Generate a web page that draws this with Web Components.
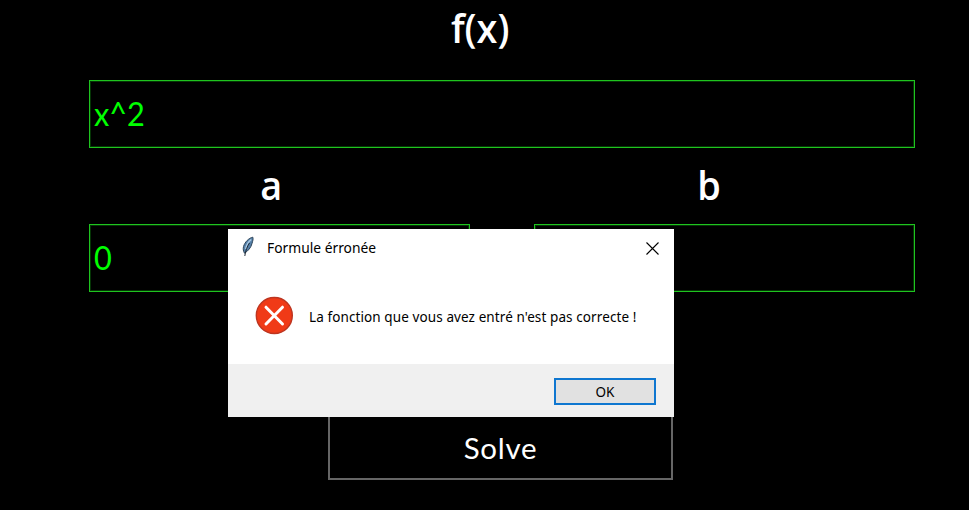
<!DOCTYPE html>
<html lang="fr">
<head>
<meta charset="utf-8">
<title>Solver</title>
<style>
html, body { margin: 0; height: 100%; background: #000; overflow: hidden; }
</style>
</head>
<body>
<solver-app></solver-app>
<script>
const define = (name, html) => customElements.define(name, class extends HTMLElement {
  constructor() {
    super();
    this.attachShadow({ mode: 'open' }).innerHTML = html;
  }
});

define('field-label', `
<style>
:host { display: flex; justify-content: center; color: #fff; font: 600 39px/54px "Open Sans", "Noto Sans", sans-serif; }
span { display: block; transform: scaleX(.97); }
</style><span><slot></slot></span>`);

define('entry-field', `
<style>
:host { display: flex; align-items: center; box-sizing: border-box; height: 68px; border: 1px solid #1fc41f; outline: 1px solid #053505; outline-offset: -2px; padding: 0 4px; background: #000; color: #0f0; font: 400 32px/40px Lato, sans-serif; }
span { display: block; transform-origin: left; transform: scaleX(.96); }
</style><span><slot></slot></span>`);

define('solve-button', `
<style>
:host { display: flex; align-items: center; justify-content: center; box-sizing: border-box; width: 345px; height: 68px; border: 2px solid #666; background: #000; color: #fff; font: 400 29.500px/40px Lato, sans-serif; letter-spacing: .7px; padding-top: 4px; }
</style><slot></slot>`);

define('feather-icon', `
<style>:host { display: block; width: 14px; height: 22px; } svg { display: block; }</style>
<svg width="14" height="22" viewBox="0 0 14 22">
<path d="M11.8 1.2C7.8 2 3.9 6 2.5 10.500C2 13 2.200 15 3.500 17.200C7.200 15 10 11.500 11 7.500C11.700 5 12.500 3 11.800 1.200Z" fill="#5580a8" stroke="#2d4358" stroke-width="1"/>
<path d="M10.300 3.500C7.500 5.500 5.500 9 4.700 13" fill="none" stroke="#a9c8e3" stroke-width="1.500"/>
<path d="M8.500 7C6.500 10 4.600 14 3.800 20" fill="none" stroke="#202a36" stroke-width="1"/>
</svg>`);

define('error-icon', `
<style>:host { display: block; width: 39px; height: 39px; } svg { display: block; }</style>
<svg width="39" height="39" viewBox="0 0 39 39">
<circle cx="19.300" cy="19.500" r="18" fill="#f03a17" stroke="#bd3520" stroke-width="1.400"/>
<path d="M11 11.200L27.500 28M27.500 11.200L11 28" stroke="#fff" stroke-width="3" stroke-linecap="round"/>
</svg>`);

define('close-icon', `
<style>:host { display: block; width: 13px; height: 13px; } svg { display: block; }</style>
<svg width="13" height="13" viewBox="0 0 13 13"><path d="M.5 .5L12.500 12.500M12.500 .5L.5 12.500" stroke="#000" stroke-width="1.100"/></svg>`);

define('dialog-button', `
<style>
:host { display: flex; align-items: center; justify-content: center; box-sizing: border-box; width: 102px; height: 27px; border: 2px solid #0f77d0; background: #e1e1e1; color: #000; font: 400 13.500px/18px "Noto Sans", sans-serif; }
</style><slot></slot>`);

define('message-dialog', `
<style>
:host { display: grid; grid-template-rows: 38px 97px 53px; width: 446px; height: 188px; background: #fff; color: #000; font-family: "Noto Sans", sans-serif; }
header { display: flex; align-items: center; padding: 0 15px 2px 13px; }
h1 { margin: 0 auto 0 12px; font-size: 14.500px; line-height: 20px; font-weight: 400; transform-origin: left; transform: scaleX(.953); white-space: nowrap; }
close-icon { margin-top: 2px; }
main { display: flex; align-items: flex-start; padding: 29px 0 0 27px; }
p { margin: 11px 0 0 15px; font-size: 13.500px; line-height: 20px; letter-spacing: .1px; white-space: nowrap; }
footer { display: flex; align-items: center; justify-content: flex-end; padding: 2px 18px 0 0; background: #f0f0f0; }
</style>
<header><feather-icon></feather-icon><h1><slot name="title"></slot></h1><close-icon></close-icon></header>
<main><error-icon></error-icon><p><slot></slot></p></main>
<footer><dialog-button>OK</dialog-button></footer>`);

define('solver-app', `
<style>
:host { display: block; position: relative; height: 510px; overflow: hidden; background: #000; }
form { display: grid; grid-template-columns: 381px 381px; column-gap: 64px; grid-template-rows: 80px 68px 76px 68px 120px 68px; padding-left: 89px; }
.wide { grid-column: 1 / -1; }
.top { padding-top: 1px; padding-right: 43px; }
.sub { padding-top: 10px; }
.a { padding-right: 17px; }
.b { padding-right: 31px; }
solve-button { margin-left: 239px; }
message-dialog { position: absolute; left: 228px; top: 229px; }
</style>
<form>
<field-label class="wide top">f(x)</field-label>
<entry-field class="wide">x^2</entry-field>
<field-label class="sub a">a</field-label>
<field-label class="sub b">b</field-label>
<entry-field>0</entry-field>
<entry-field></entry-field>
<span class="wide"></span>
<solve-button class="wide">Solve</solve-button>
</form>
<message-dialog><span slot="title">Formule érronée</span>La fonction que vous avez entré n'est pas correcte !</message-dialog>`);
</script>
</body>
</html>
